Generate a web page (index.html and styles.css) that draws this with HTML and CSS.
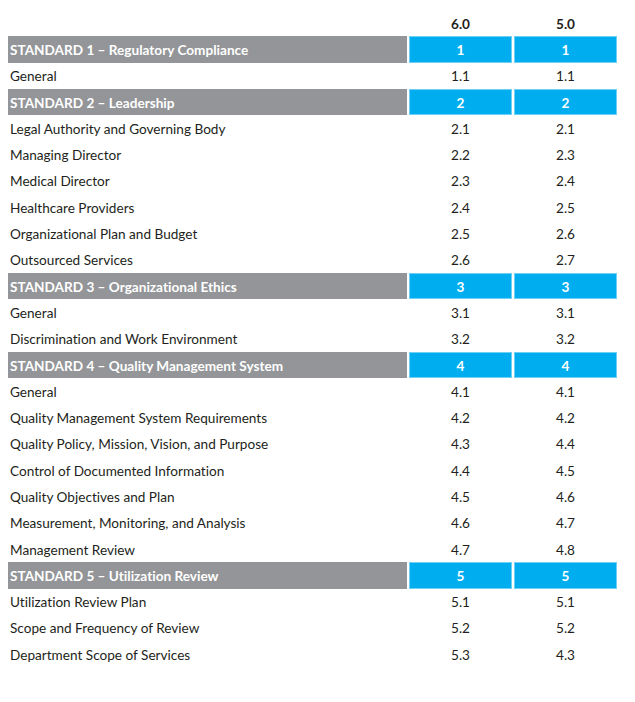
FILE: index.html
```html
<!DOCTYPE html>
<html>
<head>
<meta charset="utf-8">
<link rel="stylesheet" href="styles.css">
</head>
<body>
<div class="table">
  <div class="cell head"></div><div class="cell head num">6.0</div><div class="cell head num">5.0</div>

  <div class="cell std">STANDARD 1 – Regulatory Compliance</div><div class="cell stdnum">1</div><div class="cell stdnum">1</div>
  <div class="cell">General</div><div class="cell num">1.1</div><div class="cell num">1.1</div>

  <div class="cell std">STANDARD 2 – Leadership</div><div class="cell stdnum">2</div><div class="cell stdnum">2</div>
  <div class="cell">Legal Authority and Governing Body</div><div class="cell num">2.1</div><div class="cell num">2.1</div>
  <div class="cell">Managing Director</div><div class="cell num">2.2</div><div class="cell num">2.3</div>
  <div class="cell">Medical Director</div><div class="cell num">2.3</div><div class="cell num">2.4</div>
  <div class="cell">Healthcare Providers</div><div class="cell num">2.4</div><div class="cell num">2.5</div>
  <div class="cell">Organizational Plan and Budget</div><div class="cell num">2.5</div><div class="cell num">2.6</div>
  <div class="cell">Outsourced Services</div><div class="cell num">2.6</div><div class="cell num">2.7</div>

  <div class="cell std">STANDARD 3 – Organizational Ethics</div><div class="cell stdnum">3</div><div class="cell stdnum">3</div>
  <div class="cell">General</div><div class="cell num">3.1</div><div class="cell num">3.1</div>
  <div class="cell">Discrimination and Work Environment</div><div class="cell num">3.2</div><div class="cell num">3.2</div>

  <div class="cell std">STANDARD 4 – Quality Management System</div><div class="cell stdnum">4</div><div class="cell stdnum">4</div>
  <div class="cell">General</div><div class="cell num">4.1</div><div class="cell num">4.1</div>
  <div class="cell">Quality Management System Requirements</div><div class="cell num">4.2</div><div class="cell num">4.2</div>
  <div class="cell">Quality Policy, Mission, Vision, and Purpose</div><div class="cell num">4.3</div><div class="cell num">4.4</div>
  <div class="cell">Control of Documented Information</div><div class="cell num">4.4</div><div class="cell num">4.5</div>
  <div class="cell">Quality Objectives and Plan</div><div class="cell num">4.5</div><div class="cell num">4.6</div>
  <div class="cell">Measurement, Monitoring, and Analysis</div><div class="cell num">4.6</div><div class="cell num">4.7</div>
  <div class="cell">Management Review</div><div class="cell num">4.7</div><div class="cell num">4.8</div>

  <div class="cell std">STANDARD 5 – Utilization Review</div><div class="cell stdnum">5</div><div class="cell stdnum">5</div>
  <div class="cell">Utilization Review Plan</div><div class="cell num">5.1</div><div class="cell num">5.1</div>
  <div class="cell">Scope and Frequency of Review</div><div class="cell num">5.2</div><div class="cell num">5.2</div>
  <div class="cell">Department Scope of Services</div><div class="cell num">5.3</div><div class="cell num">4.3</div>
</div>
</body>
</html>
```

FILE: styles.css
```css
html, body {
  margin: 0;
  padding: 0;
  background: #ffffff;
}
body {
  font-family: Lato, "Open Sans", "Liberation Sans", sans-serif;
  font-size: 13.6px;
  font-variant-ligatures: none;
  color: #231f20;
}
.table {
  display: grid;
  grid-template-columns: 399px 103px 103px;
  grid-auto-rows: 26.3px;
  column-gap: 2px;
  margin: 10px 0 0 8px;
  width: 609px;
}
.cell {
  display: flex;
  align-items: center;
  padding: 1px 0 0 2px;
  white-space: nowrap;
}
.num {
  justify-content: center;
  padding-left: 0;
}
.head {
  font-weight: 700;
}
.std {
  background: #939598;
  color: #ffffff;
  font-weight: 700;
}
.stdnum {
  background: #00aeef;
  color: #ffffff;
  font-weight: 700;
  justify-content: center;
  padding-left: 0;
  box-shadow: inset 0 0 0 1px #6fd0f5;
}
```
